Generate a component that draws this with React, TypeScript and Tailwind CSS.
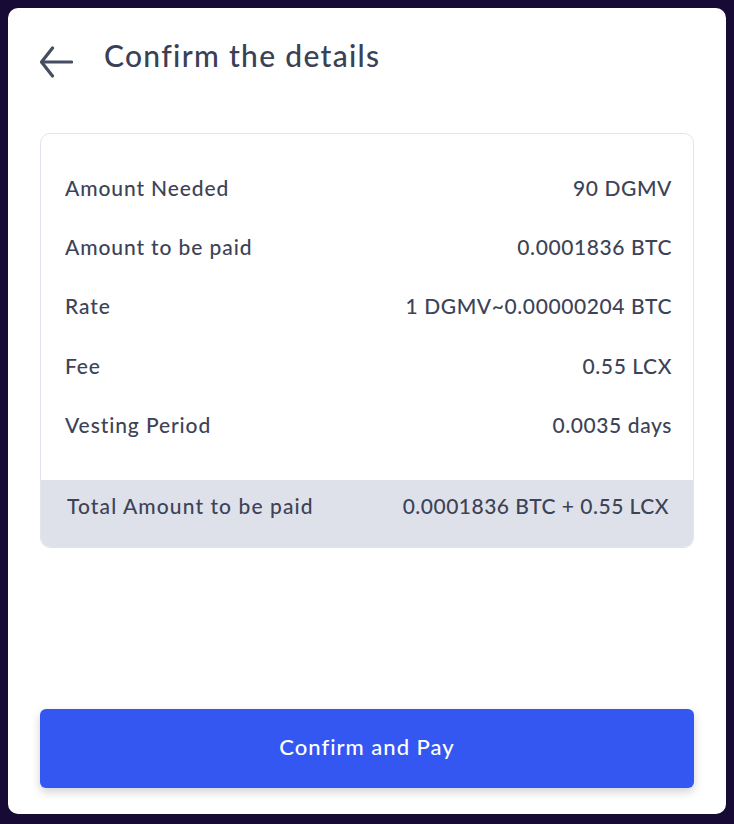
const rows = [
  { label: 'Amount Needed', value: '90 DGMV' },
  { label: 'Amount to be paid', value: '0.0001836 BTC' },
  { label: 'Rate', value: '1 DGMV~0.00000204 BTC' },
  { label: 'Fee', value: '0.55 LCX' },
  { label: 'Vesting Period', value: '0.0035 days' },
];

const BackArrow = () => (
  <svg width="33" height="32" viewBox="0 0 33 32" fill="none" stroke="#474d60" strokeWidth="3.2" strokeLinecap="round" strokeLinejoin="round">
    <path d="M31.5 16H2" />
    <path d="M12.5 2L1.5 16l11 14" />
  </svg>
);

const App = () => {
  return (
    <div className="min-h-screen bg-[#170b35] p-2 font-['Lato',sans-serif]">
      <div className="bg-white rounded-[10px] h-[806px] flex flex-col px-8 pb-[26px]">
        <div className="flex items-start pt-[27px]">
          <div className="mt-[11px]">
            <BackArrow />
          </div>
          <h1 className="ml-[31px] text-[30px] tracking-[1.3px] font-medium text-[#3a4154] leading-[40px]">Confirm the details</h1>
        </div>

        <div className="mt-[55px] border border-[#e2e4ec] rounded-[10px] overflow-hidden">
          <div className="pt-6 pb-[26px] pl-6 pr-[21px]">
            {rows.map((row) => (
              <div key={row.label} className="flex justify-between items-center h-[59.25px] text-[21px] font-medium text-[#3d4357]">
                <span className="tracking-[0.9px]">{row.label}</span>
                <span className="tracking-[0.6px]">{row.value}</span>
              </div>
            ))}
          </div>
          <div className="bg-[#dfe1ea] h-[67px] flex justify-between items-start pt-[10px] pl-[26px] pr-6 text-[21px] font-medium text-[#3d4357]">
            <span className="tracking-[1.1px]">Total Amount to be paid</span>
            <span className="tracking-[0.5px]">0.0001836 BTC + 0.55 LCX</span>
          </div>
        </div>

        <div className="flex-1" />

        <button className="w-full h-[79px] bg-[#3557f1] rounded-md text-white text-[22px] tracking-[1px] font-medium pb-1 shadow-[0_4px_10px_rgba(0,0,0,0.18)]">
          Confirm and Pay
        </button>
      </div>
    </div>
  );
};

export default App;
